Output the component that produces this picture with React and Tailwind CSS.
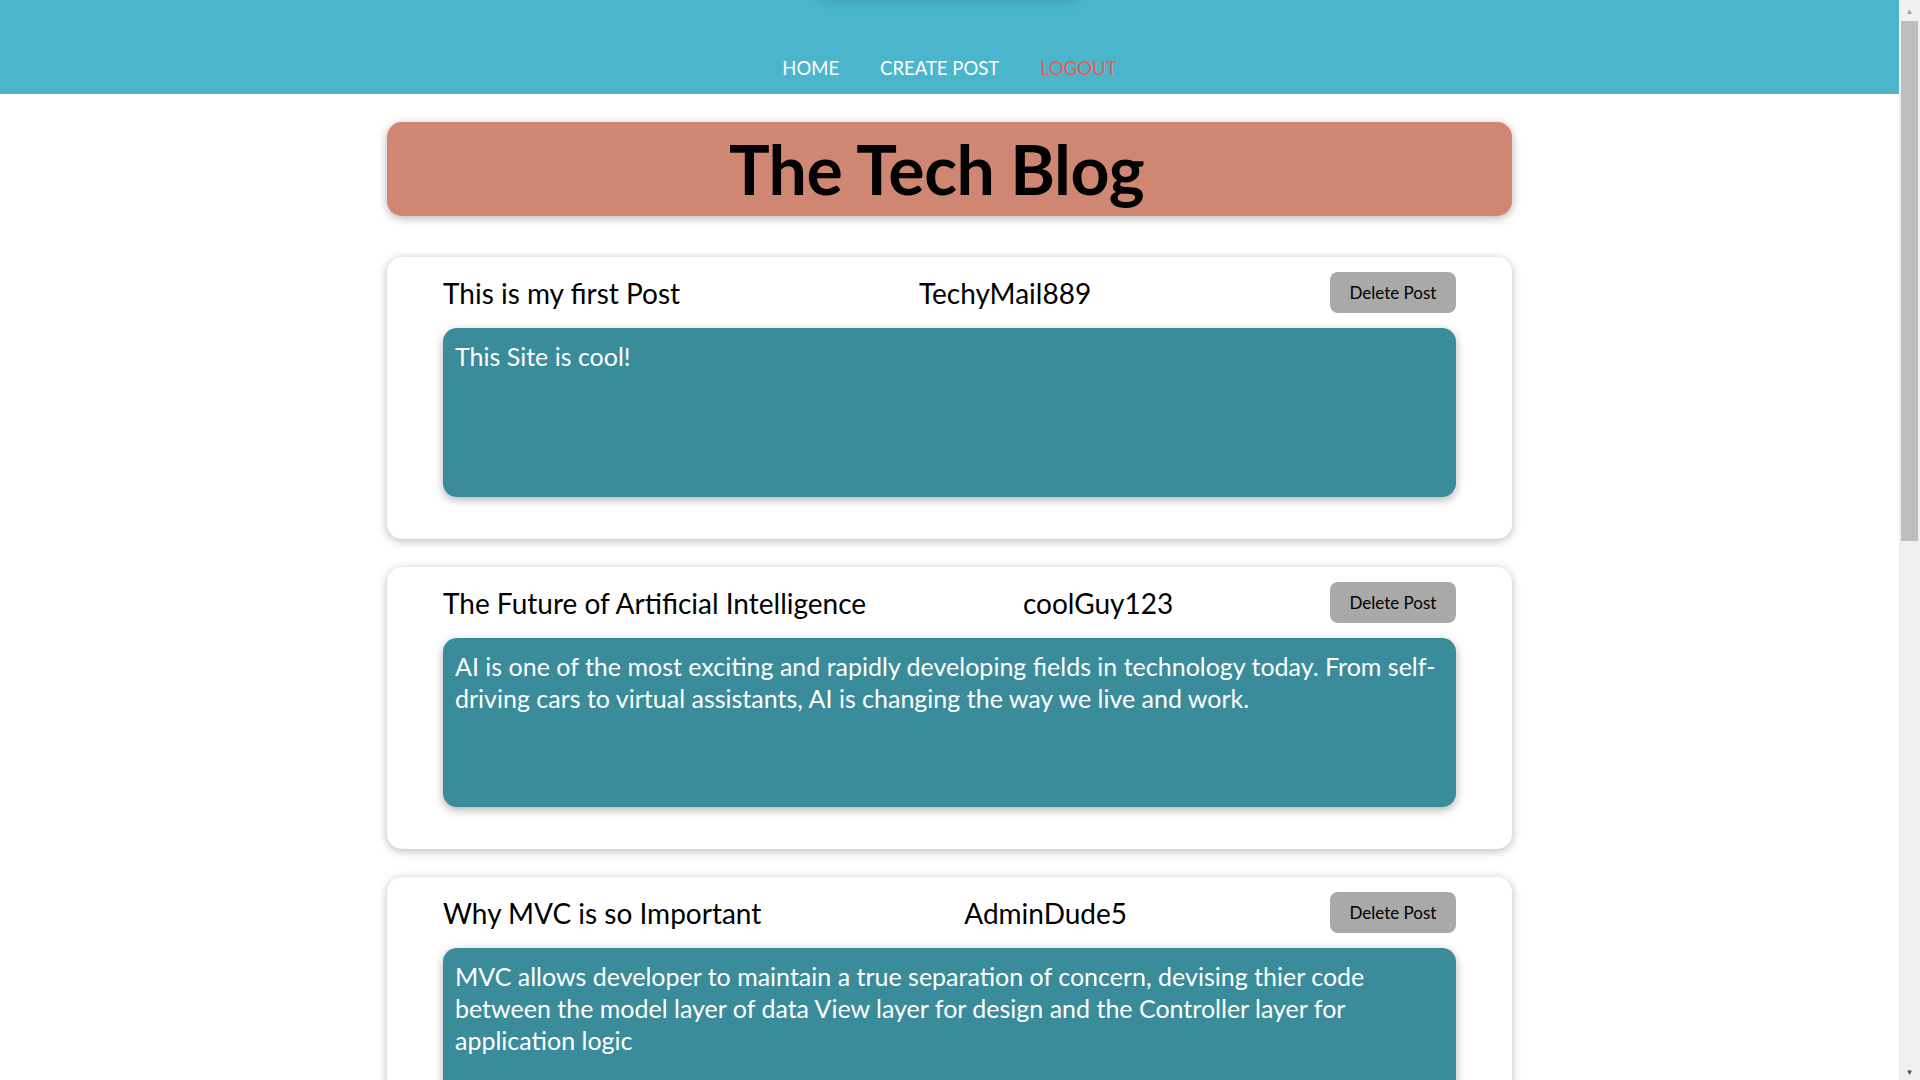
const posts = [
  {
    title: 'This is my first Post',
    author: 'TechyMail889',
    body: 'This Site is cool!'
  },
  {
    title: 'The Future of Artificial Intelligence',
    author: 'coolGuy123',
    body: 'AI is one of the most exciting and rapidly developing fields in technology today. From self-driving cars to virtual assistants, AI is changing the way we live and work.'
  },
  {
    title: 'Why MVC is so Important',
    author: 'AdminDude5',
    body: 'MVC allows developer to maintain a true separation of concern, devising thier code between the model layer of data View layer for design and the Controller layer for application logic'
  }
]

const PostCard = ({ post }) => (
  <section className="bg-white rounded-[15px] shadow-[0_2px_10px_rgba(0,0,0,0.28)] px-[56px] pt-[15px] pb-[42px]">
    <div className="flex items-center justify-between h-[41px]">
      <h2 className="text-[28px] text-black">{post.title}</h2>
      <span className="text-[28px] text-black">{post.author}</span>
      <button className="w-[126px] h-[41px] rounded-[8px] bg-[#a9a9a9] text-[17px] text-black">Delete Post</button>
    </div>
    <div className="mt-[15px] min-h-[169px] rounded-[14px] bg-[#3a8c9a] shadow-[0_3px_10px_rgba(0,0,0,0.3)] px-[12px] pt-[12px] pb-4">
      <p className="text-[25px] leading-[32px] text-white">{post.body}</p>
    </div>
  </section>
)

export default function App() {
  return (
    <div className="flex h-screen overflow-hidden bg-white font-['Lato',sans-serif]">
      <div className="flex-1 overflow-hidden">
        <nav className="relative h-[94px] overflow-hidden bg-[#4bb6cb] pt-[54px]">
          <div className="absolute -top-[16px] left-1/2 -translate-x-1/2 w-[260px] h-[16px] rounded-full shadow-[0_0_14px_rgba(0,0,0,0.18)]" />
          <ul className="flex justify-center gap-[41px] text-[18.5px] leading-[28px]">
            <li className="text-white">HOME</li>
            <li className="text-white">CREATE POST</li>
            <li className="text-[#ef5a5a]">LOGOUT</li>
          </ul>
        </nav>

        <main className="w-[1125px] mx-auto pt-[28px] flex flex-col">
          <header className="h-[94px] rounded-[15px] bg-[#cf8672] shadow-[0_2px_10px_rgba(0,0,0,0.3)] flex items-center justify-center pr-[26px]">
            <h1 className="text-[68px] font-bold text-black tracking-[-0.5px]">The Tech Blog</h1>
          </header>

          <div className="mt-[41px] flex flex-col gap-[28px] pb-10">
            {posts.map((post, index) => (
              <PostCard key={index} post={post} />
            ))}
          </div>
        </main>
      </div>

      <div className="w-[21px] bg-[#f0f0f0] flex flex-col items-center">
        <span className="h-[21px] flex items-center justify-center text-[8px] text-[#a3a3a3]">▲</span>
        <div className="w-[17px] h-[520px] bg-[#bebebe]" />
        <div className="flex-1" />
        <span className="h-[17px] flex items-center justify-center text-[8px] text-[#505050]">▼</span>
      </div>
    </div>
  )
}
